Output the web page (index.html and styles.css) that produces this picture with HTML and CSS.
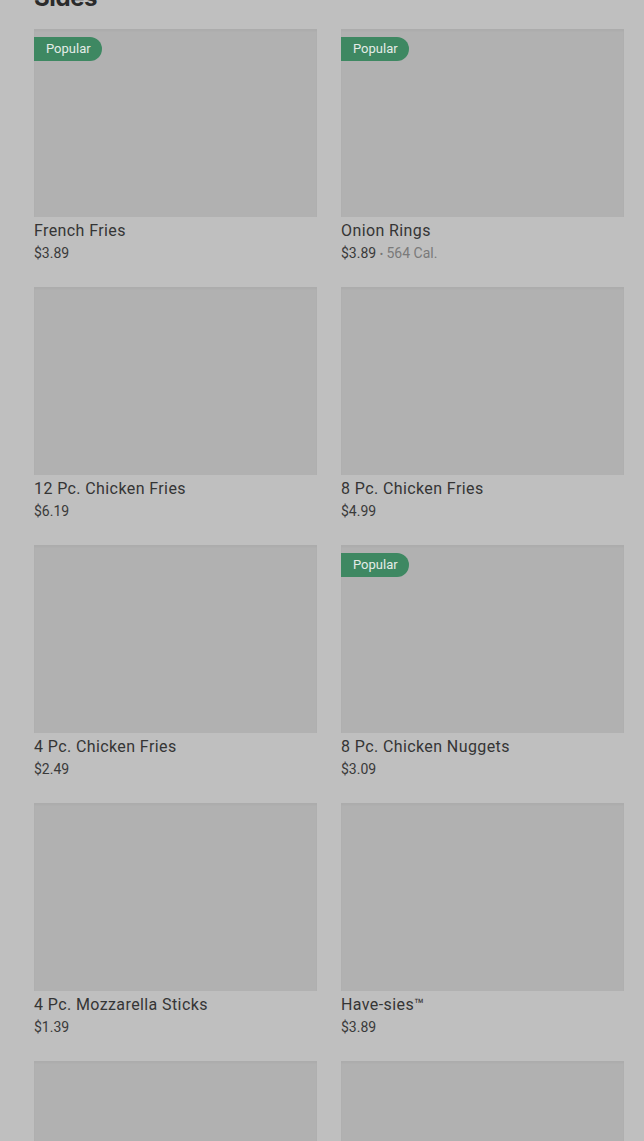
FILE: index.html
```html
<!DOCTYPE html>
<html lang="en">

<head>
    <meta charset="UTF-8">
    <meta name="viewport" content="width=device-width, initial-scale=1.0">
    <title>Sides</title>
    <link rel="stylesheet" href="styles.css">
</head>

<body>

    <section class="menu-section">
        <h2 class="section-title">Sides</h2>

        <div class="item-grid">
            <!-- French Fries -->
            <div class="item-card">
                <div class="item-image">
                    <span class="badge">Popular</span>
                </div>
                <div class="item-name">French Fries</div>
                <div class="item-meta">$3.89</div>
            </div>

            <!-- Onion Rings -->
            <div class="item-card">
                <div class="item-image">
                    <span class="badge">Popular</span>
                </div>
                <div class="item-name">Onion Rings</div>
                <div class="item-meta">$3.89 <span class="dot">•</span> <span class="cal">564 Cal.</span></div>
            </div>

            <div class="item-card">
                <div class="item-image"></div>
                <div class="item-name">12 Pc. Chicken Fries</div>
                <div class="item-meta">$6.19</div>
            </div>

            <div class="item-card">
                <div class="item-image"></div>
                <div class="item-name">8 Pc. Chicken Fries</div>
                <div class="item-meta">$4.99</div>
            </div>

            <div class="item-card">
                <div class="item-image"></div>
                <div class="item-name">4 Pc. Chicken Fries</div>
                <div class="item-meta">$2.49</div>
            </div>

            <div class="item-card">
                <div class="item-image">
                    <span class="badge">Popular</span>
                </div>
                <div class="item-name">8 Pc. Chicken Nuggets</div>
                <div class="item-meta">$3.09</div>
            </div>

            <div class="item-card">
                <div class="item-image"></div>
                <div class="item-name">4 Pc. Mozzarella Sticks</div>
                <div class="item-meta">$1.39</div>
            </div>

            <div class="item-card">
                <div class="item-image"></div>
                <div class="item-name">Have-sies™</div>
                <div class="item-meta">$3.89</div>
            </div>

            <div class="item-card">
                <div class="item-image"></div>
            </div>

            <div class="item-card">
                <div class="item-image"></div>
            </div>
        </div>
    </section>

</body>
</html>
```

FILE: styles.css
```css
body {
    font-family: Roboto, "Liberation Sans", sans-serif;
    margin: 0;
    background-color: #bfbfbf;
    color: #383838;
    overflow: hidden;
}

.menu-section {
    padding: 0 20px 0 34px;
}

.section-title {
    font-family: Inter, "Liberation Sans", sans-serif;
    font-size: 24px;
    line-height: 28px;
    font-weight: 700;
    letter-spacing: -0.4px;
    color: #2b2b2b;
    margin: -16px 0 17px;
}

.item-grid {
    display: grid;
    grid-template-columns: 283px 283px;
    column-gap: 24px;
}

.item-card {
    padding-bottom: 24px;
}

.item-image {
    position: relative;
    height: 188px;
    background-color: #b1b1b1;
    box-shadow: inset 0 2px 2px rgba(0, 0, 0, 0.03);
}

.badge {
    position: absolute;
    top: 8px;
    left: 0;
    height: 24px;
    line-height: 24px;
    padding: 0 11px 0 12px;
    border-radius: 0 12px 12px 0;
    background-color: #3e8862;
    color: #e4ece7;
    font-size: 13px;
}

.item-name {
    margin-top: 4px;
    font-size: 16px;
    line-height: 20px;
    letter-spacing: 0.4px;
    color: #353535;
}

.item-meta {
    margin-top: 2px;
    height: 20px;
    font-size: 14px;
    line-height: 20px;
    color: #3a3a3a;
}

.dot {
    color: #777;
    font-size: 10px;
    line-height: 10px;
}

.cal {
    color: #7a7a7a;
}
```
